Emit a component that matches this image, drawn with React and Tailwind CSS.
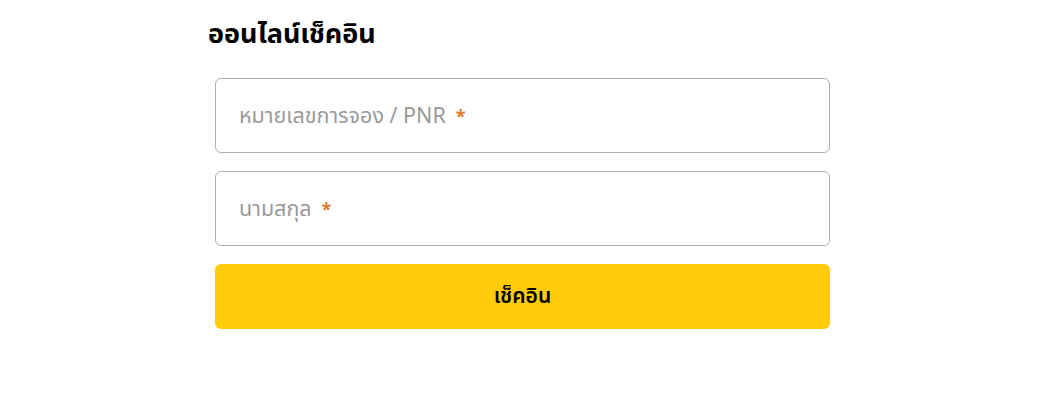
export default function App() {
  const font = { fontFamily: '"Noto Sans Thai", "Noto Sans", "DejaVu Sans", sans-serif' };
  return (
    <div className="w-[1062px] h-[406px] bg-white" style={font}>
      <div className="ml-[208px] w-[622px] pt-[15px]">
        <h1 className="text-[27px] leading-[40px] font-bold text-black">ออนไลน์เช็คอิน</h1>
        <div className="ml-[7px] mt-[23px] flex flex-col gap-[18px]">
          <div className="h-[75px] rounded-[6px] border border-[#b0b0b0] flex items-center px-[23px] pt-[3px] text-[21.5px] text-[#9a9a9a]">
            <span>หมายเลขการจอง / PNR</span>
            <span className="ml-[10px] text-[18px] font-bold text-[#e07b2c]">*</span>
          </div>
          <div className="h-[75px] rounded-[6px] border border-[#b0b0b0] flex items-center px-[23px] pt-[3px] text-[21.5px] text-[#9a9a9a]">
            <span>นามสกุล</span>
            <span className="ml-[10px] text-[18px] font-bold text-[#e07b2c]">*</span>
          </div>
          <button className="h-[65px] rounded-[6px] bg-[#ffcc0b] flex items-center justify-center text-[21px] font-semibold text-black">
            เช็คอิน
          </button>
        </div>
      </div>
    </div>
  );
}
